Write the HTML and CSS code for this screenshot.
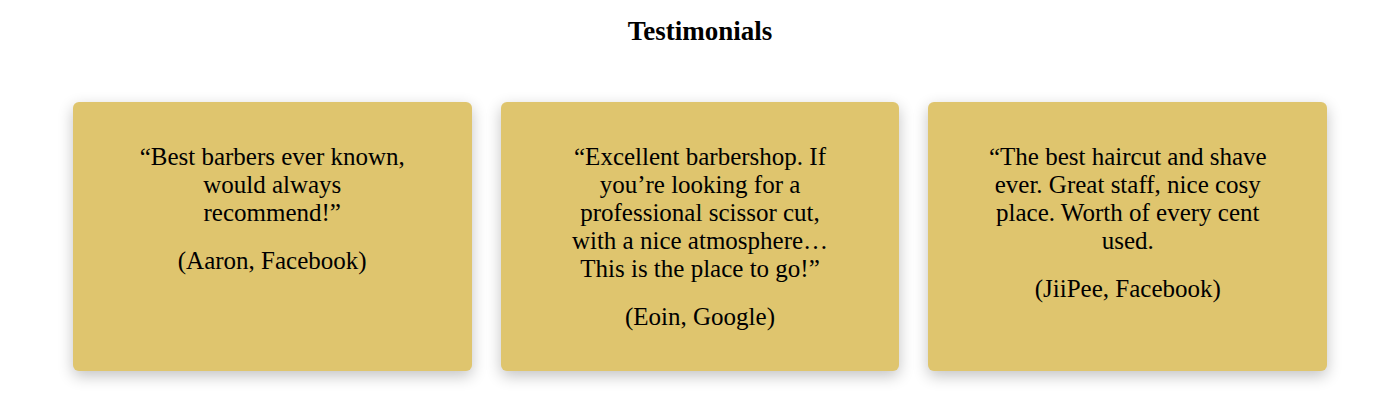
FILE: index.html
```html
<!DOCTYPE html>
<html>
<head>
<meta charset="utf-8">
<link rel="stylesheet" href="styles.css">
</head>
<body>
<section class="testimonials">
  <h2 class="title">Testimonials</h2>
  <div class="cards">
    <div class="card">
      <p>“Best barbers ever known, would always recommend!”</p>
      <p>(Aaron, Facebook)</p>
    </div>
    <div class="card">
      <p>“Excellent barbershop. If you’re looking for a professional scissor cut, with a nice atmosphere… This is the place to go!”</p>
      <p>(Eoin, Google)</p>
    </div>
    <div class="card">
      <p>“The best haircut and shave ever. Great staff, nice cosy place. Worth of every cent used.</p>
      <p>(JiiPee, Facebook)</p>
    </div>
  </div>
</section>
</body>
</html>
```
FILE: styles.css
```css
html, body {
  margin: 0;
  padding: 0;
  background: #ffffff;
}
body {
  font-family: "Liberation Serif", "Times New Roman", serif;
  color: #000;
}
.testimonials {
  width: 1400px;
  padding-top: 16px;
  padding-bottom: 32px;
}
.title {
  margin: 0;
  text-align: center;
  font-size: 27px;
  font-weight: bold;
  line-height: 31px;
}
.cards {
  display: flex;
  gap: 29.2px;
  justify-content: center;
  margin-top: 55px;
}
.card {
  width: 398.6px;
  height: 269px;
  box-sizing: border-box;
  background: #dfc56e;
  border-radius: 6px;
  box-shadow: 0 5px 15px rgba(0, 0, 0, 0.24);
  padding: 41px 59px;
  text-align: center;
  font-size: 25px;
  line-height: 28px;
}
.card p {
  margin: 0 0 20px;
}
```
